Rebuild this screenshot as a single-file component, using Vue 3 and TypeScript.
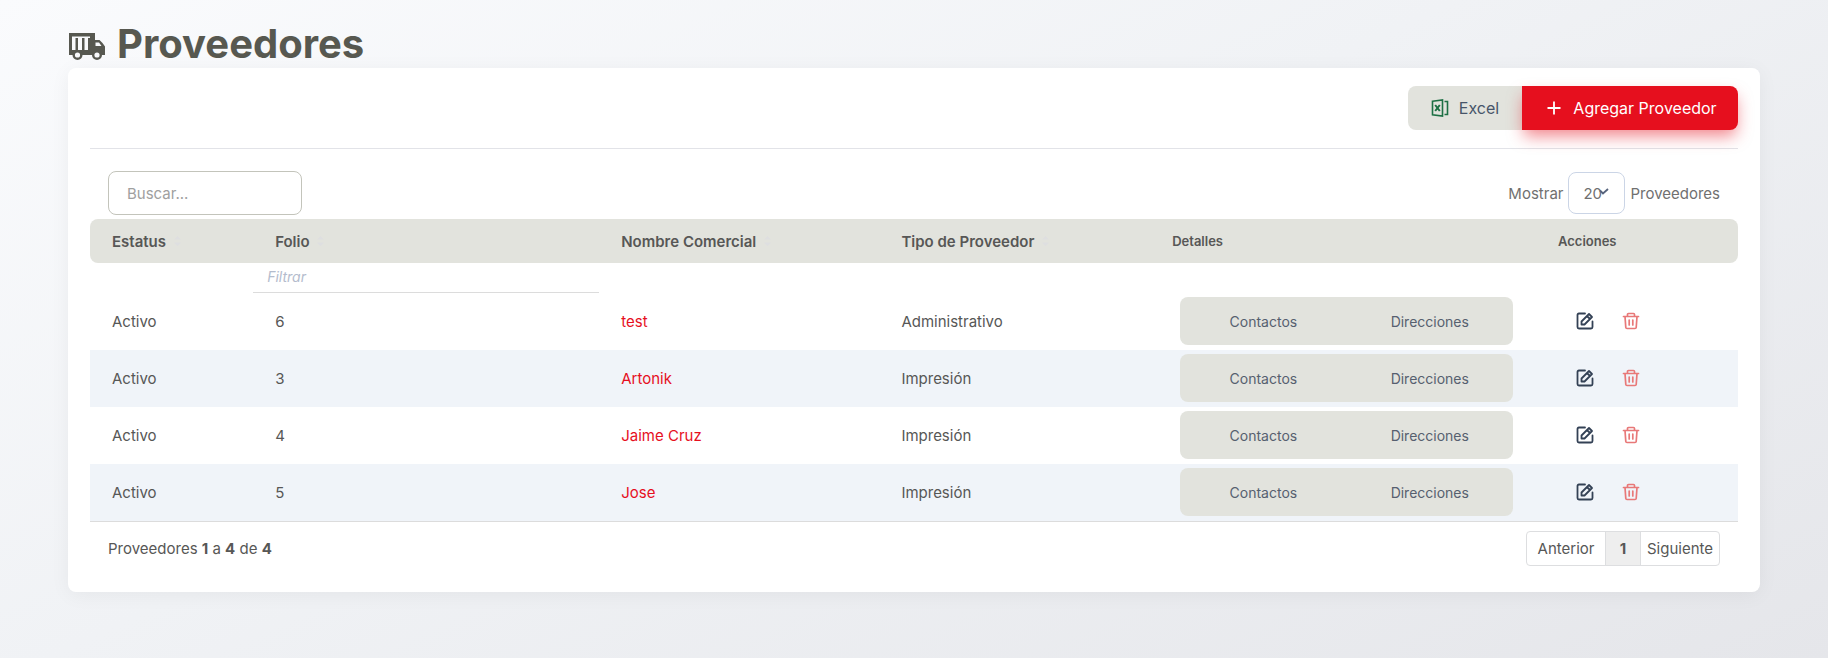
<script setup lang="ts">
import { computed, ref } from 'vue'

interface Supplier {
  id: number
  status: string
  name: string
  type: string
}

const suppliers: Supplier[] = [
  { id: 6, status: 'Activo', name: 'test', type: 'Administrativo' },
  { id: 3, status: 'Activo', name: 'Artonik', type: 'Impresión' },
  { id: 4, status: 'Activo', name: 'Jaime Cruz', type: 'Impresión' },
  { id: 5, status: 'Activo', name: 'Jose', type: 'Impresión' },
]

const sortable = ['Estatus', 'Folio', 'Nombre Comercial', 'Tipo de Proveedor']
const search = ref('')
const folio = ref('')
const pageSize = ref('20')

const visible = computed(() =>
  suppliers.filter(
    (s) =>
      `${s.name} ${s.type}`.toLowerCase().includes(search.value.toLowerCase()) &&
      String(s.id).includes(folio.value),
  ),
)
</script>

<template>
  <main class="page">
    <h1 class="title">
      <svg class="truck" viewBox="0 0 37 27" aria-hidden="true">
        <path
          fill="currentColor"
          fill-rule="evenodd"
          d="M1 0H27V7H31.500Q34 9 37 13.500V22H1ZM4 3.500V17H7.500V5H10V17H14V5H16.500V17H20V5H22V3.500ZM27.500 9.500V13H33.500L31 9.500Z"
        />
        <circle cx="9.500" cy="22" r="3.800" fill="#f8f9fb" stroke="currentColor" stroke-width="2.400" />
        <circle cx="29" cy="22" r="3.800" fill="#f8f9fb" stroke="currentColor" stroke-width="2.400" />
      </svg>
      Proveedores
    </h1>

    <section class="card">
      <div class="actions">
        <button type="button" class="btn btn-excel">
          <svg class="icon-excel" viewBox="0 0 18 18" fill="none" stroke="#1d7044" stroke-width="1.600" aria-hidden="true">
            <path d="M1.500 2.300 11.500 1V17L1.500 15.700ZM13.500 2.500H16.500V15.500H13.500" />
            <path d="M4.200 6 8.800 12M8.800 6 4.200 12" stroke-width="2" />
          </svg>
          Excel
        </button>
        <button type="button" class="btn btn-add">
          <svg class="icon-plus" viewBox="0 0 14 14" stroke="currentColor" stroke-width="1.800" aria-hidden="true">
            <path d="M7 0.500V13.500M0.500 7H13.500" />
          </svg>
          Agregar Proveedor
        </button>
      </div>

      <div class="toolbar">
        <input v-model="search" class="search" type="text" placeholder="Buscar..." aria-label="Buscar" />
        <div class="size">
          <label for="page-size">Mostrar</label>
          <span class="select-box">
            <select id="page-size" v-model="pageSize">
              <option>10</option>
              <option>20</option>
              <option>50</option>
            </select>
            <svg viewBox="0 0 10 8" fill="none" stroke="#56637c" stroke-width="1.800" aria-hidden="true">
              <path d="M1 2.500 4 5.500 9 1" />
            </svg>
          </span>
          <span>Proveedores</span>
        </div>
      </div>

      <table>
        <colgroup>
          <col class="c-status" />
          <col class="c-folio" />
          <col class="c-name" />
          <col class="c-type" />
          <col class="c-details" />
          <col class="c-actions" />
        </colgroup>
        <thead>
          <tr class="head">
            <th v-for="label in sortable" :key="label" scope="col">
              {{ label }}
              <svg class="sort" viewBox="0 0 7 12" fill="#dedfe0" aria-hidden="true">
                <path d="M0 4.500 3.500 1 7 4.500ZM0 7.500H7L3.500 11Z" />
              </svg>
            </th>
            <th scope="col" class="small details-head">Detalles</th>
            <th scope="col" class="small actions-head">Acciones</th>
          </tr>
          <tr class="filters">
            <td></td>
            <td class="filter-cell">
              <input v-model="folio" type="text" placeholder="Filtrar" aria-label="Filtrar folio" />
            </td>
            <td colspan="4"></td>
          </tr>
        </thead>
        <tbody>
          <tr v-for="s in visible" :key="s.id">
            <td>{{ s.status }}</td>
            <td>{{ s.id }}</td>
            <td><a href="#">{{ s.name }}</a></td>
            <td>{{ s.type }}</td>
            <td class="details">
              <div class="group">
                <button type="button">Contactos</button>
                <button type="button">Direcciones</button>
              </div>
            </td>
            <td class="row-actions">
              <div class="icons">
                <button type="button" class="edit" aria-label="Editar">
                  <svg viewBox="0 0 18 18" fill="none" stroke="currentColor" stroke-width="1.800" stroke-linejoin="round" stroke-linecap="round">
                    <path d="M9 1.500H3Q1.500 1.500 1.500 3V15Q1.500 16.500 3 16.500H15Q16.500 16.500 16.500 15V9.500M5.500 12.500V9.500L13 2 16 5 8.500 12.500ZM11 4 14 7" />
                  </svg>
                </button>
                <button type="button" class="delete" aria-label="Eliminar">
                  <svg viewBox="0 0 18 18" fill="none" stroke="currentColor" stroke-width="1.700" stroke-linejoin="round" stroke-linecap="round">
                    <path d="M1.500 4.500H16.500M5.500 4.500V2.500Q5.500 1.500 6.500 1.500H11.500Q12.500 1.500 12.500 2.500V4.500M3 4.500 3.800 15.500Q3.900 16.500 5 16.500H13Q14.100 16.500 14.200 15.500L15 4.500M7.200 8V13M10.800 8V13" />
                  </svg>
                </button>
              </div>
            </td>
          </tr>
        </tbody>
      </table>

      <footer class="foot">
        <span>Proveedores <b>1</b> a <b>4</b> de <b>4</b></span>
        <nav class="pager" aria-label="Paginación">
          <button type="button">Anterior</button>
          <button type="button" class="current" aria-current="page">1</button>
          <button type="button">Siguiente</button>
        </nav>
      </footer>
    </section>
  </main>
</template>

<style>
body {
  margin: 0;
}
</style>

<style scoped>
* {
  box-sizing: border-box;
}

.page {
  min-height: 100vh;
  padding: 20px 68px 66px;
  background: linear-gradient(155deg, #fafbfd 0%, #f0f2f5 45%, #e5e6ea 100%);
  font-family: Inter, "Liberation Sans", sans-serif;
  font-size: 15px;
  color: #575756;
}

button,
input,
select {
  font: inherit;
  color: inherit;
}

button {
  padding: 0;
  border: 0;
  background: none;
  cursor: pointer;
}

.title {
  display: flex;
  align-items: center;
  gap: 12px;
  margin: 0;
  height: 48px;
  font-size: 40px;
  line-height: 48px;
  font-weight: 700;
  color: #575850;
}

.truck {
  width: 37px;
  height: 27px;
  margin-top: 4px;
}

.card {
  padding: 18px 22px 26px;
  border-radius: 8px;
  background: #fff;
  box-shadow: 0 3px 20px rgba(0, 0, 0, 0.05);
}

.actions {
  display: flex;
  justify-content: flex-end;
  padding-bottom: 18px;
  border-bottom: 1px solid #e2e3e8;
}

.btn {
  display: flex;
  align-items: center;
  justify-content: center;
  height: 44px;
  font-size: 16px;
}

.btn-excel {
  width: 114px;
  gap: 10px;
  border-radius: 8px 0 0 8px;
  background: #e2e3dd;
  color: #475569;
}

.btn-add {
  width: 216px;
  gap: 12px;
  padding-left: 4px;
  border-radius: 0 8px 8px 0;
  background: #e60f1e;
  color: #fff;
  box-shadow: 0 8px 16px -2px rgba(230, 15, 30, 0.5);
}

.icon-excel {
  width: 18px;
  height: 18px;
}

.icon-plus {
  width: 14px;
  height: 14px;
}

.toolbar {
  display: flex;
  align-items: center;
  justify-content: space-between;
  padding: 22px 18px 4px;
}

.search {
  width: 194px;
  height: 44px;
  padding: 0 18px;
  border: 1px solid #c3c4bb;
  border-radius: 8px;
  background: #fff;
}

.search::placeholder {
  color: #a0a0a0;
  opacity: 1;
}

.size {
  display: flex;
  align-items: center;
  gap: 5px;
  color: #707070;
}

.select-box {
  position: relative;
}

.select-box select {
  display: block;
  width: 57px;
  height: 42px;
  padding: 0 14px;
  border: 1px solid #cbd5e6;
  border-radius: 8px;
  background: #fff;
  appearance: none;
}

.select-box svg {
  position: absolute;
  top: 16px;
  right: 16px;
  width: 10px;
  height: 8px;
  pointer-events: none;
}

table {
  width: 100%;
  table-layout: fixed;
  border-collapse: separate;
  border-spacing: 0;
  border-bottom: 1px solid #dcdcdc;
}

.c-status { width: 9.9%; }
.c-folio { width: 21%; }
.c-name { width: 17%; }
.c-type { width: 17.1%; }
.c-details { width: 22.5%; }
.c-actions { width: 12.5%; }

th,
td {
  padding: 0 22px;
  text-align: left;
}

.head th {
  height: 44px;
  background: #e2e3dd;
  font-weight: 600;
}

.head th:first-child {
  border-radius: 8px 0 0 8px;
}

.head th:last-child {
  border-radius: 0 8px 8px 0;
}

.head .small {
  font-size: 13px;
}

.head .details-head {
  padding-left: 11px;
}

.head .actions-head {
  padding-left: 26px;
}

.sort {
  width: 7px;
  height: 12px;
  margin-left: 4px;
}

.filters td {
  height: 30px;
}

.filters .filter-cell {
  padding: 0;
  border-bottom: 1px solid #dcdcdc;
}

.filter-cell input {
  display: block;
  width: 100%;
  height: 29px;
  padding: 0 14px 2px;
  border: 0;
  outline: 0;
  background: none;
  font-size: 14px;
  font-style: italic;
}

.filter-cell input::placeholder {
  color: #b4bccd;
  opacity: 1;
}

tbody td {
  height: 57px;
}

tbody tr:nth-child(even) {
  background: #f0f4f9;
}

tbody a {
  color: #e60f1e;
  text-decoration: none;
}

tbody .details {
  padding: 0 19px 1px;
}

tbody .row-actions {
  padding: 0 0 1px 44px;
}

.group {
  display: flex;
  height: 48px;
  border-radius: 8px;
  background: #e2e3dd;
}

.group button {
  flex: 1;
  font-size: 14px;
  color: #56606f;
}

.icons {
  display: flex;
  gap: 28px;
}

.icons button,
.icons svg {
  display: block;
  width: 18px;
  height: 18px;
}

.edit {
  color: #334155;
}

.delete {
  color: #e87878;
}

.foot {
  display: flex;
  align-items: center;
  justify-content: space-between;
  padding: 9px 18px 0;
}

.pager {
  display: flex;
  height: 35px;
  border: 1px solid #dddee0;
  border-radius: 4px;
  overflow: hidden;
}

.pager button {
  width: 78px;
}

.pager .current {
  width: 36px;
  border: solid #dddee0;
  border-width: 0 1px;
  background: #eee;
  font-weight: 700;
}
</style>
